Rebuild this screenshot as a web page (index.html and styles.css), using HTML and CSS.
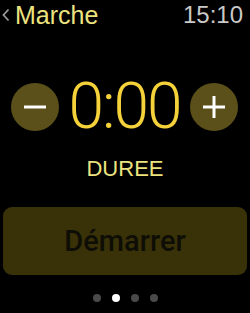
FILE: index.html
```html
<!DOCTYPE html>
<html>
<head>
<meta charset="utf-8">
<link rel="stylesheet" href="styles.css">
</head>
<body>
<div class="screen">
  <header class="top">
    <div class="back">
      <svg class="chev" width="8" height="14" viewBox="0 0 8 14"><polyline points="6.5,1.5 1.5,7 6.5,12.5" fill="none" stroke="#9a9a9a" stroke-width="1.8"/></svg>
      <span class="title">Marche</span>
    </div>
    <span class="clock">15:10</span>
  </header>
  <div class="stepper">
    <div class="circle">
      <svg width="24" height="24" viewBox="0 0 24 24"><line x1="1" y1="12" x2="23" y2="12" stroke="#fff" stroke-width="3"/></svg>
    </div>
    <div class="time">0:00</div>
    <div class="circle">
      <svg width="24" height="24" viewBox="0 0 24 24"><line x1="1" y1="12" x2="23" y2="12" stroke="#fff" stroke-width="3"/><line x1="12" y1="1" x2="12" y2="23" stroke="#fff" stroke-width="3"/></svg>
    </div>
  </div>
  <div class="label">DUREE</div>
  <div class="btn">Démarrer</div>
  <div class="dots">
    <span class="dot"></span>
    <span class="dot active"></span>
    <span class="dot"></span>
    <span class="dot"></span>
  </div>
</div>
</body>
</html>
```
FILE: styles.css
```css
html, body {
  margin: 0;
  padding: 0;
  background: #000;
}
.screen {
  width: 250px;
  height: 313px;
  display: flex;
  flex-direction: column;
  font-family: "Liberation Sans", Arial, sans-serif;
  overflow: hidden;
}
.top {
  height: 30px;
  display: flex;
  justify-content: space-between;
  align-items: center;
  padding: 0 7px 0 2px;
}
.back {
  display: flex;
  align-items: center;
  gap: 5px;
}
.chev {
  display: block;
}
.title {
  color: #ece37f;
  font-size: 25px;
  line-height: 30px;
}
.clock {
  color: #c9c9c9;
  font-size: 24px;
  line-height: 30px;
}
.stepper {
  margin-top: 53px;
  height: 48px;
  display: flex;
  align-items: center;
  justify-content: space-between;
  padding: 0 12px 0 11px;
}
.circle {
  width: 48px;
  height: 48px;
  border-radius: 50%;
  background: #5b501a;
  display: flex;
  align-items: center;
  justify-content: center;
}
.circle svg {
  display: block;
}
.time {
  color: #f5d23a;
  font-family: Roboto, "Liberation Sans", sans-serif;
  font-weight: 300;
  font-size: 64px;
  line-height: 48px;
  letter-spacing: -2px;
}
.label {
  margin-top: 25px;
  text-align: center;
  color: #ece37f;
  font-size: 22px;
  line-height: 26px;
}
.btn {
  margin: 25px 3px 0 3px;
  height: 68px;
  border-radius: 9px;
  background: #393208;
  color: #0f0e06;
  font-family: Roboto, "Liberation Sans", sans-serif;
  font-weight: 500;
  font-size: 29px;
  display: flex;
  align-items: center;
  justify-content: center;
}
.dots {
  margin-top: 19px;
  display: flex;
  justify-content: center;
  gap: 11px;
}
.dot {
  width: 8px;
  height: 8px;
  border-radius: 50%;
  background: #4a4a4a;
}
.dot.active {
  background: #fff;
}
```
